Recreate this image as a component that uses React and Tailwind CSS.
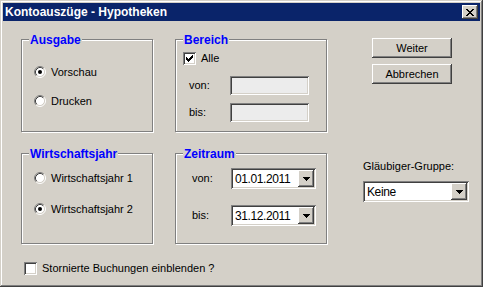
import React from "react";

const font = { fontFamily: '"Liberation Sans", Arial, sans-serif' };

const raised =
  "shadow-[inset_-1px_-1px_0_#404040,inset_1px_1px_0_#ffffff,inset_-2px_-2px_0_#808080]";
const sunken =
  "shadow-[inset_1px_1px_0_#808080,inset_-1px_-1px_0_#ffffff,inset_2px_2px_0_#404040,inset_-2px_-2px_0_#d4d0c8]";

const Group = ({ title, className, children }) => (
  <div
    className={`relative border border-[#808080] shadow-[1px_1px_0_#ffffff,inset_1px_1px_0_#ffffff] ${className}`}
  >
    <span className="absolute -top-[7px] left-[7px] px-[1px] bg-[#d4d0c8] text-[12px] leading-[14px] font-bold text-[#0000ff]">
      {title}
    </span>
    {children}
  </div>
);

const Radio = ({ checked }) => (
  <svg width="12" height="12" viewBox="0 0 12 12" className="shrink-0">
    <circle cx="6" cy="6" r="4.5" fill="#ffffff" />
    <path d="M2.11 9.89 A5.5 5.5 0 0 1 9.89 2.11" fill="none" stroke="#808080" />
    <path d="M9.89 2.11 A5.5 5.5 0 0 1 2.11 9.89" fill="none" stroke="#ffffff" />
    <path d="M2.82 9.18 A4.5 4.5 0 0 1 9.18 2.82" fill="none" stroke="#404040" />
    <path d="M9.18 2.82 A4.5 4.5 0 0 1 2.82 9.18" fill="none" stroke="#d4d0c8" />
    {checked && <circle cx="6" cy="6" r="2" fill="#000000" />}
  </svg>
);

const RadioRow = ({ label, checked, className = "" }) => (
  <div className={`flex items-center h-[14px] gap-[5px] ${className}`}>
    <Radio checked={checked} />
    <span className="text-[11px] leading-[14px] text-black">{label}</span>
  </div>
);

const Checkbox = ({ checked }) => (
  <div className={`w-[13px] h-[13px] bg-white shrink-0 ${sunken}`}>
    {checked && (
      <svg width="13" height="13" viewBox="0 0 13 13" shapeRendering="crispEdges">
        <path
          d="M3 5h1v3H3zM4 6h1v3H4zM5 7h1v3H5zM6 6h1v3H6zM7 5h1v3H7zM8 4h1v3H8zM9 3h1v3H9z"
          fill="#000000"
        />
      </svg>
    )}
  </div>
);

const Arrow = () => (
  <div className={`w-[16px] h-[17px] bg-[#d4d0c8] flex items-center justify-center ${raised}`}>
    <svg width="7" height="4" viewBox="0 0 7 4" shapeRendering="crispEdges">
      <path d="M0 0h7v1H0zM1 1h5v1H1zM2 2h3v1H2zM3 3h1v1H3z" fill="#000000" />
    </svg>
  </div>
);

const Combo = ({ value, className }) => (
  <div className={`h-[21px] bg-white flex items-center justify-between pl-[4px] pr-[2px] ${sunken} ${className}`}>
    <span className="text-[12px] leading-[14px] text-black tracking-[-0.4px]">{value}</span>
    <Arrow />
  </div>
);

const Button = ({ children }) => (
  <div
    className={`w-[80px] h-[20px] bg-[#d4d0c8] flex items-center justify-center text-[11px] text-black ${raised}`}
  >
    {children}
  </div>
);

export default function App() {
  return (
    <div
      style={font}
      className="w-[483px] h-[287px] bg-[#d4d0c8] p-[3px] flex flex-col shadow-[inset_-1px_-1px_0_#404040,inset_1px_1px_0_#d4d0c8,inset_-2px_-2px_0_#808080,inset_2px_2px_0_#ffffff]"
    >
      {/* title bar */}
      <div className="h-[18px] bg-[#0a246a] flex items-center justify-between pl-[2px] pr-[2px]">
        <span className="text-[12px] leading-[14px] font-bold text-white">Kontoauszüge - Hypotheken</span>
        <div className={`w-[16px] h-[14px] bg-[#d4d0c8] flex items-center justify-center ${raised}`}>
          <svg width="8" height="7" viewBox="0 0 8 7" shapeRendering="crispEdges">
            <path
              d="M0 0h2v1H0zM6 0h2v1H6zM1 1h2v1H1zM5 1h2v1H5zM2 2h4v1H2zM3 3h2v1H3zM2 4h4v1H2zM1 5h2v1H1zM5 5h2v1H5zM0 6h2v1H0zM6 6h2v1H6z"
              fill="#000000"
            />
          </svg>
        </div>
      </div>

      {/* client */}
      <div className="flex flex-col pl-[18px] pt-[18px]">
        <div className="flex">
          <Group title="Ausgabe" className="w-[132px] h-[93px] pl-[12px] pt-[25px]">
            <RadioRow label="Vorschau" checked />
            <RadioRow label="Drucken" className="mt-[15px]" />
          </Group>

          <Group title="Bereich" className="ml-[22px] w-[152px] h-[93px] pl-[7px] pt-[12px]">
            <div className="flex items-center gap-[5px]">
              <Checkbox checked />
              <span className="text-[11px] leading-[13px] text-black">Alle</span>
            </div>
            <div className="flex items-center mt-[11px] ml-[6px]">
              <span className="w-[41px] text-[11px] text-black">von:</span>
              <div className={`w-[79px] h-[19px] bg-[#ececec] ${sunken}`} />
            </div>
            <div className="flex items-center mt-[8px] ml-[6px]">
              <span className="w-[41px] text-[11px] text-black">bis:</span>
              <div className={`w-[79px] h-[19px] bg-[#ececec] ${sunken}`} />
            </div>
          </Group>

          <div className="ml-[45px] -mt-[1px] flex flex-col gap-[6px]">
            <Button>Weiter</Button>
            <Button>Abbrechen</Button>
          </div>
        </div>

        <div className="flex mt-[21px]">
          <Group title="Wirtschaftsjahr" className="w-[132px] h-[91px] pl-[12px] pt-[17px]">
            <RadioRow label="Wirtschaftsjahr 1" />
            <RadioRow label="Wirtschaftsjahr 2" checked className="mt-[17px]" />
          </Group>

          <Group title="Zeitraum" className="ml-[22px] w-[152px] h-[91px] pl-[16px] pt-[14px]">
            <div className="flex items-center">
              <span className="w-[39px] text-[11px] text-black">von:</span>
              <Combo value="01.01.2011" className="w-[85px]" />
            </div>
            <div className="flex items-center mt-[16px]">
              <span className="w-[39px] text-[11px] text-black">bis:</span>
              <Combo value="31.12.2011" className="w-[85px]" />
            </div>
          </Group>

          <div className="ml-[36px] flex flex-col pt-[7px]">
            <span className="text-[11px] leading-[13px] text-black">Gläubiger-Gruppe:</span>
            <Combo value="Keine" className="mt-[8px] w-[106px]" />
          </div>
        </div>

        <div className="flex items-center mt-[18px] ml-[3px] gap-[5px]">
          <Checkbox />
          <span className="text-[11px] leading-[13px] text-black">Stornierte Buchungen einblenden ?</span>
        </div>
      </div>
    </div>
  );
}
